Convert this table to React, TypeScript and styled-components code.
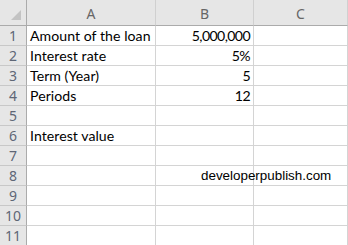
import React from "react";
import styled, { createGlobalStyle } from "styled-components";

const Global = createGlobalStyle`
  html, body { margin: 0; padding: 0; background: #ffffff; overflow: hidden; }
  #root { width: 348px; height: 245px; overflow: hidden; }
`;

const Sheet = styled.div`
  display: grid;
  grid-template-columns: 27px 129px 98px 1fr;
  grid-template-rows: 26px repeat(11, 20px);
  width: 348px;
  font-family: Lato, "Open Sans", sans-serif;
`;

const Corner = styled.div`
  background: #e6e6e6;
  border-right: 1px solid #ababab;
  border-bottom: 1px solid #ababab;
  position: relative;
`;

const Triangle = styled.div`
  position: absolute;
  right: 5px;
  bottom: 5px;
  width: 0;
  height: 0;
  border-left: 10px solid transparent;
  border-bottom: 10px solid #c3c3c3;
`;

const ColHead = styled.div`
  background: #e6e6e6;
  border-right: 1px solid #d0d0d0;
  border-bottom: 1px solid #ababab;
  color: #666666;
  font-family: "Noto Sans", sans-serif;
  font-size: 14px;
  display: flex;
  align-items: center;
  justify-content: center;
  padding-top: 1px;
`;

const RowHead = styled.div`
  background: #e6e6e6;
  border-right: 1px solid #ababab;
  border-bottom: 1px solid #c8c8c8;
  color: #5e6676;
  font-family: "Noto Sans", sans-serif;
  font-size: 14px;
  display: flex;
  align-items: flex-end;
  justify-content: center;
  line-height: 19px;
`;

const Cell = styled.div<{ $align?: "left" | "right"; $num?: boolean }>`
  border-right: 1px solid #d4d4d4;
  border-bottom: 1px solid #d4d4d4;
  color: #000000;
  font-size: 14.1px;
  letter-spacing: ${(p) => (p.$num ? "-0.6px" : "0.05px")};
  display: flex;
  align-items: flex-end;
  justify-content: ${(p) => (p.$align === "right" ? "flex-end" : "flex-start")};
  padding: 0 3px 0 3px;
  line-height: 19px;
  white-space: nowrap;
  position: relative;
`;

const WebCell = styled(Cell)`
  font-family: "Liberation Sans", Arial, sans-serif;
  font-size: 13.4px;
  letter-spacing: 0;
  padding-left: 45px;
  z-index: 1;
`;

type Row = [string, string, boolean?];

const rows: Row[] = [
  ["Amount of the loan", "5,000,000"],
  ["Interest rate", "5%"],
  ["Term (Year)", "5"],
  ["Periods", "12"],
  ["", ""],
  ["Interest value", ""],
  ["", ""],
  ["", "developerpublish.com", true],
  ["", ""],
  ["", ""],
  ["", ""],
];

export default function App() {
  return (
    <>
      <Global />
      <Sheet>
        <Corner>
          <Triangle />
        </Corner>
        <ColHead>A</ColHead>
        <ColHead>B</ColHead>
        <ColHead>C</ColHead>
        {rows.map(([a, b, web], i) => (
          <React.Fragment key={i}>
            <RowHead>{i + 1}</RowHead>
            <Cell>{a}</Cell>
            {web ? (
              <WebCell>{b}</WebCell>
            ) : (
              <Cell $align="right" $num>
                {b}
              </Cell>
            )}
            <Cell />
          </React.Fragment>
        ))}
      </Sheet>
    </>
  );
}
